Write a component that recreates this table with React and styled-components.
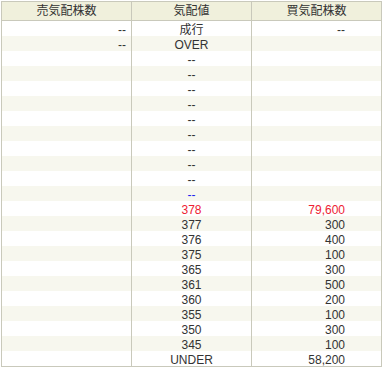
import React from "react";
import styled, { createGlobalStyle } from "styled-components";

const GlobalStyle = createGlobalStyle`
  body {
    margin: 0;
    padding: 1px;
    background: #ffffff;
    font-family: "Liberation Sans", "Noto Sans CJK JP", sans-serif;
  }
`;

const BoardTable = styled.table`
  width: 381px;
  border-collapse: collapse;
  border: 1px solid #c9c9bb;
  font-size: 12px;
  color: #333333;
  table-layout: fixed;
`;

const HeadCell = styled.th`
  height: 18px;
  padding: 0;
  font-weight: normal;
  text-align: center;
  background: #f0f0dc;
  border: 1px solid #c9c9bb;
  line-height: 18px;
`;

const Row = styled.tr`
  background: ${(p) => (p.$odd ? "#f7f7ee" : "#ffffff")};
`;

const Cell = styled.td`
  height: 12px;
  padding: 3px ${(p) => p.$padRight || 0}px 0 0;
  line-height: 12px;
  text-align: ${(p) => p.$align || "right"};
  color: ${(p) => p.$color || "#333333"};
  border-left: 1px solid #c9c9bb;
  border-right: 1px solid #c9c9bb;
  white-space: nowrap;
`;

const rows = [
  { sell: "--", price: "成行", buy: "--" },
  { sell: "--", price: "OVER", buy: "" },
  ...Array.from({ length: 9 }, () => ({ sell: "", price: "--", buy: "" })),
  { sell: "", price: "--", buy: "", priceColor: "#2222ee" },
  { sell: "", price: "378", buy: "79,600", priceColor: "#ee2233", buyColor: "#ee2233" },
  { sell: "", price: "377", buy: "300" },
  { sell: "", price: "376", buy: "400" },
  { sell: "", price: "375", buy: "100" },
  { sell: "", price: "365", buy: "300" },
  { sell: "", price: "361", buy: "500" },
  { sell: "", price: "360", buy: "200" },
  { sell: "", price: "355", buy: "100" },
  { sell: "", price: "350", buy: "300" },
  { sell: "", price: "345", buy: "100" },
  { sell: "", price: "UNDER", buy: "58,200" },
];

const App = () => {
  return (
    <>
      <GlobalStyle />
      <BoardTable>
        <colgroup>
          <col style={{ width: 130 }} />
          <col style={{ width: 120 }} />
          <col />
        </colgroup>
        <thead>
          <tr>
            <HeadCell>売気配株数</HeadCell>
            <HeadCell>気配値</HeadCell>
            <HeadCell>買気配株数</HeadCell>
          </tr>
        </thead>
        <tbody>
          {rows.map((r, i) => (
            <Row key={i} $odd={i % 2 === 1}>
              <Cell $padRight={5}>{r.sell}</Cell>
              <Cell $align="center" $color={r.priceColor}>
                {r.price}
              </Cell>
              <Cell $padRight={36} $color={r.buyColor}>
                {r.buy}
              </Cell>
            </Row>
          ))}
        </tbody>
      </BoardTable>
    </>
  );
};

export default App;
